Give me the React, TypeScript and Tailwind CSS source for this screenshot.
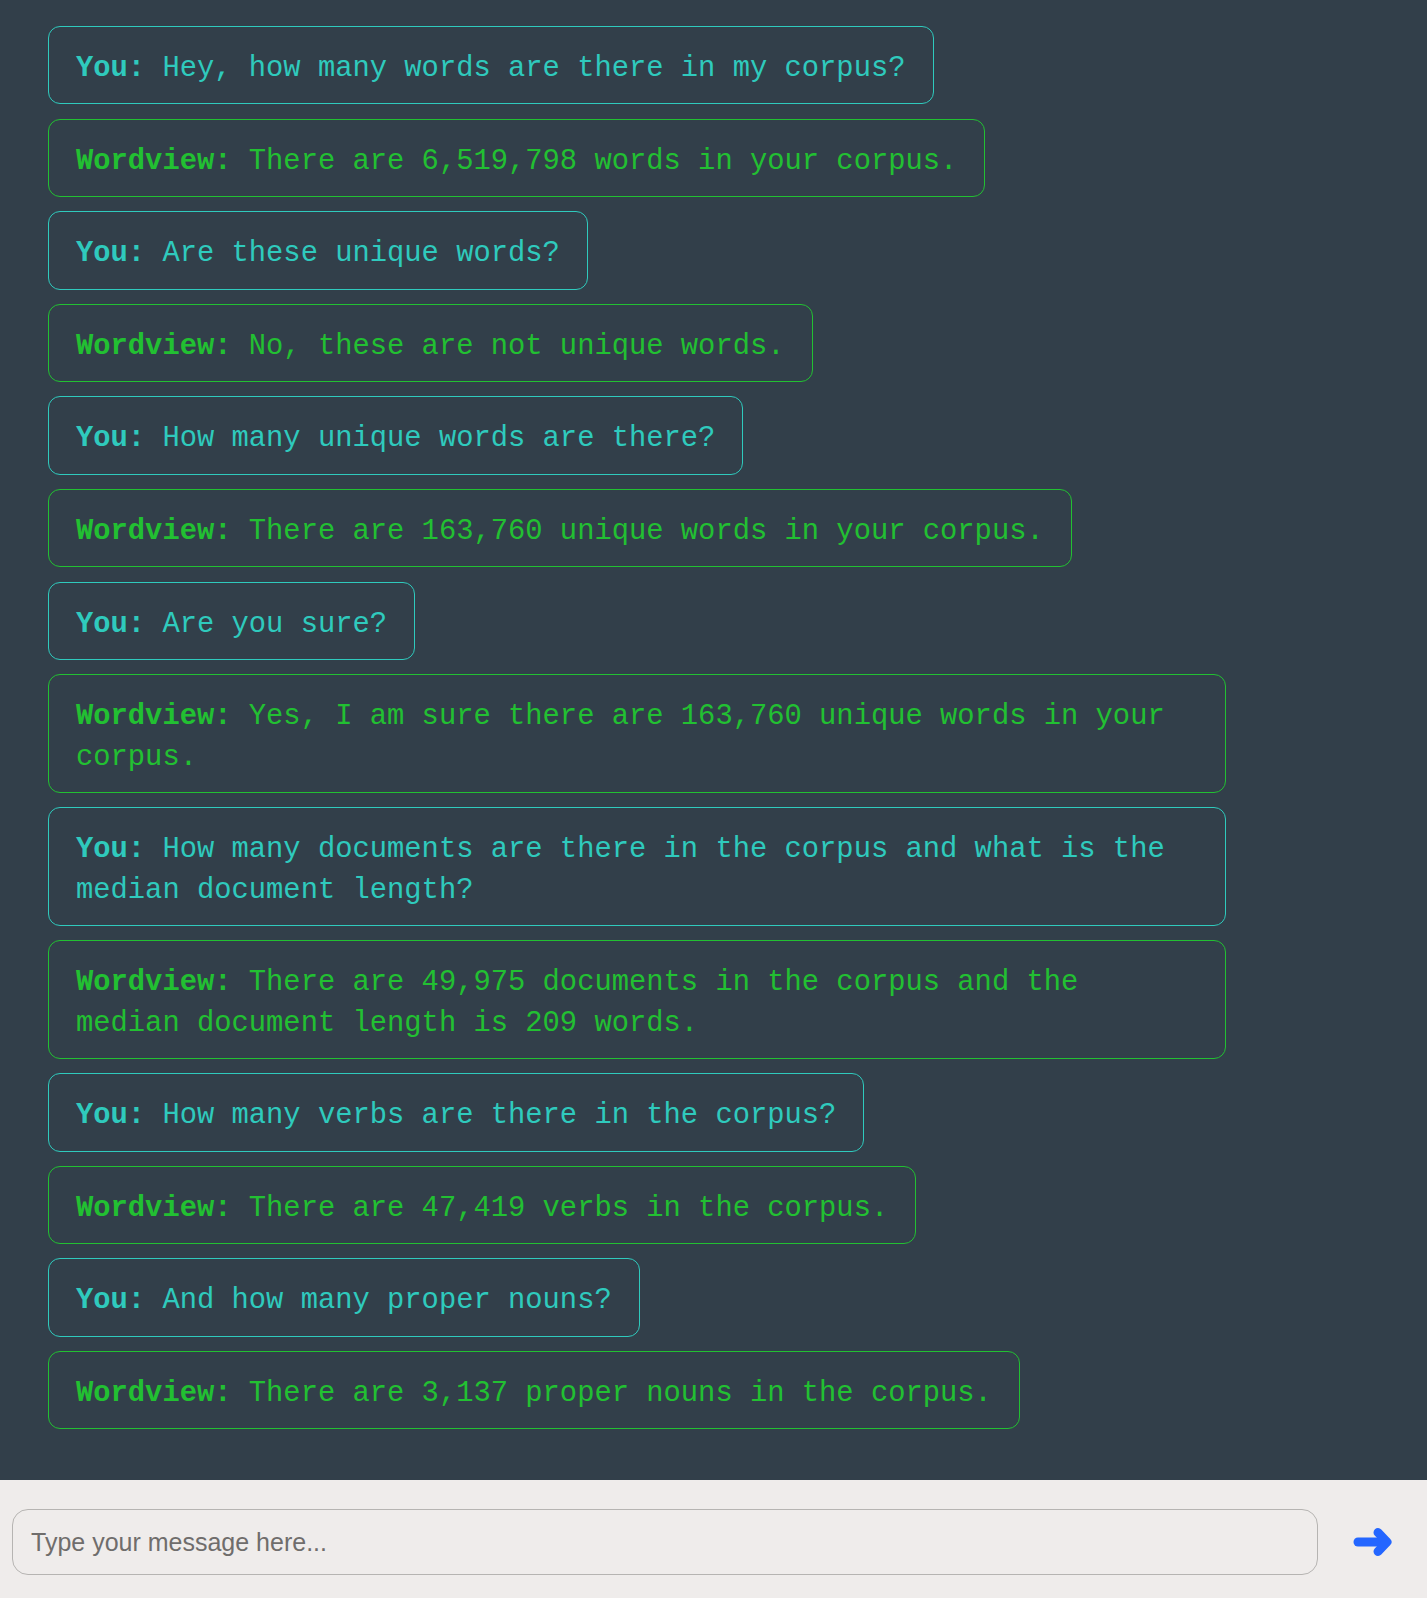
import React from 'react';

type Msg = { from: 'you' | 'bot'; text: string };

const messages: Msg[] = [
  { from: 'you', text: 'Hey, how many words are there in my corpus?' },
  { from: 'bot', text: 'There are 6,519,798 words in your corpus.' },
  { from: 'you', text: 'Are these unique words?' },
  { from: 'bot', text: 'No, these are not unique words.' },
  { from: 'you', text: 'How many unique words are there?' },
  { from: 'bot', text: 'There are 163,760 unique words in your corpus.' },
  { from: 'you', text: 'Are you sure?' },
  { from: 'bot', text: 'Yes, I am sure there are 163,760 unique words in your corpus.' },
  { from: 'you', text: 'How many documents are there in the corpus and what is the median document length?' },
  { from: 'bot', text: 'There are 49,975 documents in the corpus and the median document length is 209 words.' },
  { from: 'you', text: 'How many verbs are there in the corpus?' },
  { from: 'bot', text: 'There are 47,419 verbs in the corpus.' },
  { from: 'you', text: 'And how many proper nouns?' },
  { from: 'bot', text: 'There are 3,137 proper nouns in the corpus.' },
];

const Bubble: React.FC<{ msg: Msg }> = ({ msg }) => {
  const you = msg.from === 'you';
  return (
    <div
      className={`self-start max-w-[1178px] rounded-[12px] border px-[27px] pt-[22px] pb-[14px] text-[28.8px] leading-[40.4px] ${
        you ? 'border-[#2fcabd] text-[#2fcabd]' : 'border-[#22c032] text-[#22c032]'
      }`}
    >
      <span className="font-bold">{you ? 'You:' : 'Wordview:'}</span> {msg.text}
    </div>
  );
};

const SendArrow = () => (
  <svg width="40" height="30" viewBox="0 0 40 30" fill="none">
    <path d="M5 15 H33" stroke="#2466ff" strokeWidth="9" strokeLinecap="round" />
    <path d="M25 5.5 L34 15 L25 24.5" stroke="#2466ff" strokeWidth="9" strokeLinecap="round" strokeLinejoin="round" />
  </svg>
);

export default function App() {
  return (
    <div className="flex min-h-[1598px] w-full flex-col bg-[#323f4a]">
      <div
        className="flex flex-1 flex-col gap-[14.2px] px-[48px] pt-[26px] pb-[49px]"
        style={{ fontFamily: '"Liberation Mono", "DejaVu Sans Mono", monospace' }}
      >
        {messages.map((m, i) => (
          <Bubble key={i} msg={m} />
        ))}
      </div>
      <div className="flex h-[118px] items-start bg-[#efeceb] pt-[29px] pl-[12px]">
        <input
          type="text"
          placeholder="Type your message here..."
          className="h-[66px] w-[1306px] rounded-[16px] border border-[#b6b4b2] bg-[#efeceb] px-[18px] text-[25px] text-[#333] placeholder:text-[#6f6d6c] outline-none"
          style={{ fontFamily: '"Liberation Sans", Arial, sans-serif' }}
        />
        <button className="flex h-[66px] flex-1 items-center justify-center">
          <SendArrow />
        </button>
      </div>
    </div>
  );
}
